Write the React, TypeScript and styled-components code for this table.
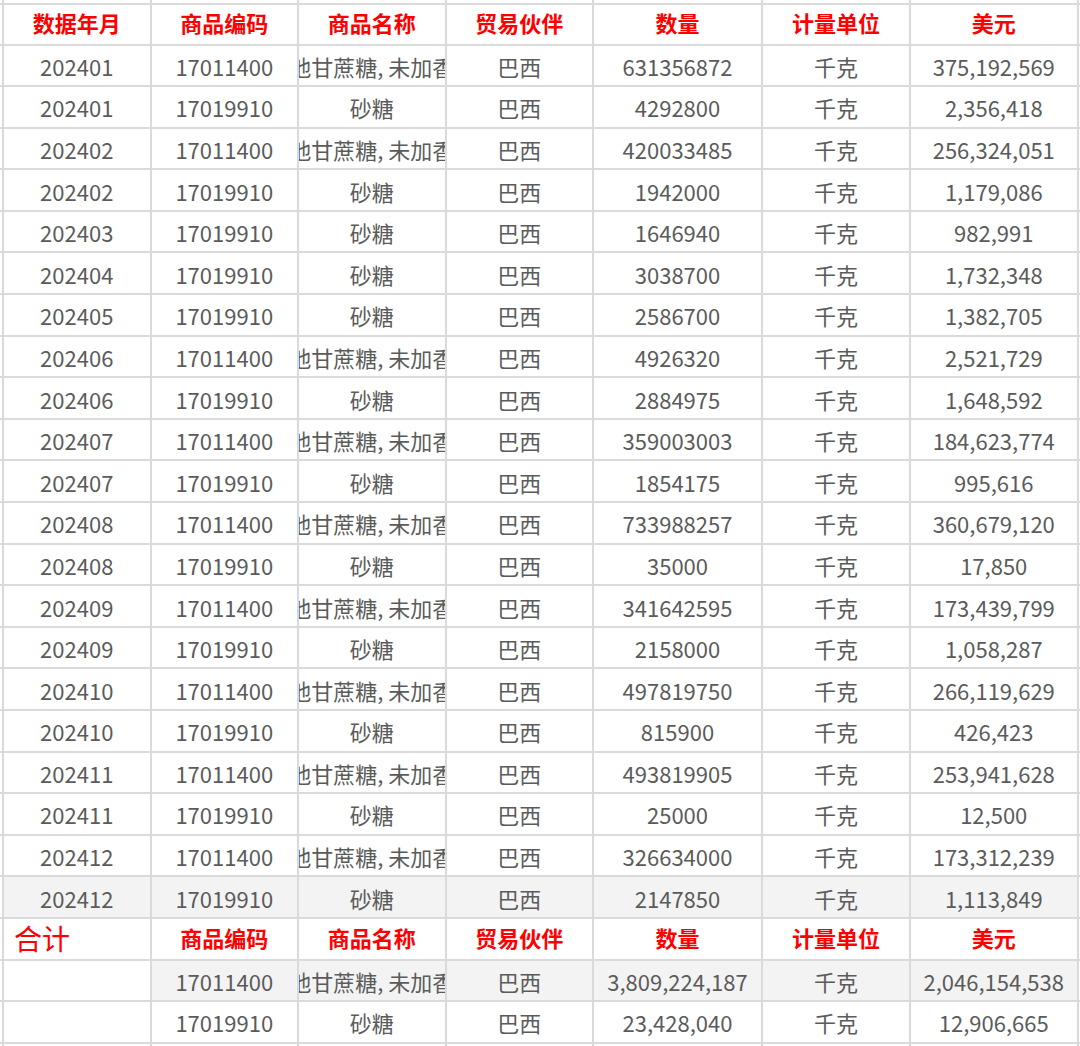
import * as React from "react";
import styled, { createGlobalStyle } from "styled-components";

const GlobalStyle = createGlobalStyle`
  html, body {
    margin: 0;
    padding: 0;
    background: #ffffff;
  }
  body {
    font-family: "Noto Sans CJK SC", "Noto Sans", sans-serif;
  }
`;

const SUGAR_RAW = "其他甘蔗糖, 未加香料";
const SUGAR = "砂糖";

type Row = [string, string, string, string, string];

// 年月, 编码, 名称, 数量, 美元 ... 伙伴与单位是固定值
const rows: Row[] = [
  ["202401", "17011400", SUGAR_RAW, "631356872", "375,192,569"],
  ["202401", "17019910", SUGAR, "4292800", "2,356,418"],
  ["202402", "17011400", SUGAR_RAW, "420033485", "256,324,051"],
  ["202402", "17019910", SUGAR, "1942000", "1,179,086"],
  ["202403", "17019910", SUGAR, "1646940", "982,991"],
  ["202404", "17019910", SUGAR, "3038700", "1,732,348"],
  ["202405", "17019910", SUGAR, "2586700", "1,382,705"],
  ["202406", "17011400", SUGAR_RAW, "4926320", "2,521,729"],
  ["202406", "17019910", SUGAR, "2884975", "1,648,592"],
  ["202407", "17011400", SUGAR_RAW, "359003003", "184,623,774"],
  ["202407", "17019910", SUGAR, "1854175", "995,616"],
  ["202408", "17011400", SUGAR_RAW, "733988257", "360,679,120"],
  ["202408", "17019910", SUGAR, "35000", "17,850"],
  ["202409", "17011400", SUGAR_RAW, "341642595", "173,439,799"],
  ["202409", "17019910", SUGAR, "2158000", "1,058,287"],
  ["202410", "17011400", SUGAR_RAW, "497819750", "266,119,629"],
  ["202410", "17019910", SUGAR, "815900", "426,423"],
  ["202411", "17011400", SUGAR_RAW, "493819905", "253,941,628"],
  ["202411", "17019910", SUGAR, "25000", "12,500"],
  ["202412", "17011400", SUGAR_RAW, "326634000", "173,312,239"],
  ["202412", "17019910", SUGAR, "2147850", "1,113,849"],
];

const totals: Row[] = [
  ["", "17011400", SUGAR_RAW, "3,809,224,187", "2,046,154,538"],
  ["", "17019910", SUGAR, "23,428,040", "12,906,665"],
];

const headers = ["数据年月", "商品编码", "商品名称", "贸易伙伴", "数量", "计量单位", "美元"];

const Sheet = styled.div`
  display: grid;
  grid-template-columns: 2px 145.5px 145.5px 145.5px 145.5px 167px 146px 165.5px 2px;
  grid-template-rows: 3px 38.5px repeat(24, 39.6px) 4px;
  gap: 2px;
  width: 1080px;
  height: 1046px;
  overflow: hidden;
  background: #dadada;
`;

const Filler = styled.div`
  background: #ffffff;
`;

const Cell = styled.div<{ $kind?: "head" | "data" | "total"; $shade?: boolean }>`
  display: flex;
  align-items: center;
  justify-content: ${(p) => (p.$kind === "total" ? "flex-start" : "center")};
  padding-left: ${(p) => (p.$kind === "total" ? "10px" : "0")};
  padding-bottom: ${(p) => (p.$kind === "head" ? "4px" : p.$kind === "total" ? "2px" : "0")};
  padding-top: ${(p) => (p.$kind === "data" ? "1px" : "0")};
  box-sizing: border-box;
  overflow: hidden;
  white-space: nowrap;
  background: ${(p) => (p.$shade ? "#f3f3f3" : "#ffffff")};
  color: ${(p) => (p.$kind === "data" ? "#5b5b5b" : "#ff0000")};
  font-size: ${(p) => (p.$kind === "total" ? "28px" : "22px")};
  font-weight: ${(p) => (p.$kind === "head" ? 700 : 400)};
  line-height: 1;
`;

const Line = ({ children }: { children: React.ReactNode }) => (
  <>
    <Filler />
    {children}
    <Filler />
  </>
);

const EdgeRow = () => (
  <>
    {Array.from({ length: 9 }).map((_, i) => (
      <Filler key={i} />
    ))}
  </>
);

const DataLine = ({ row, shade, shadeFirst }: { row: Row; shade?: boolean; shadeFirst?: boolean }) => {
  const [ym, code, name, qty, usd] = row;
  const cells = [ym, code, name, "巴西", qty, "千克", usd];
  return (
    <Line>
      {cells.map((c, i) => (
        <Cell key={i} $kind="data" $shade={i === 0 ? shadeFirst : shade}>
          {c}
        </Cell>
      ))}
    </Line>
  );
};

const App = () => {
  return (
    <>
      <GlobalStyle />
      <Sheet>
        <EdgeRow />
        <Line>
          {headers.map((h) => (
            <Cell key={h} $kind="head">
              {h}
            </Cell>
          ))}
        </Line>
        {rows.map((r, i) => {
          const last = i === rows.length - 1;
          return <DataLine key={i} row={r} shade={last} shadeFirst={last} />;
        })}
        <Line>
          <Cell $kind="total">合计</Cell>
          {headers.slice(1).map((h) => (
            <Cell key={h} $kind="head">
              {h}
            </Cell>
          ))}
        </Line>
        <DataLine row={totals[0]} shade />
        <DataLine row={totals[1]} />
        <EdgeRow />
      </Sheet>
    </>
  );
};

export default App;
